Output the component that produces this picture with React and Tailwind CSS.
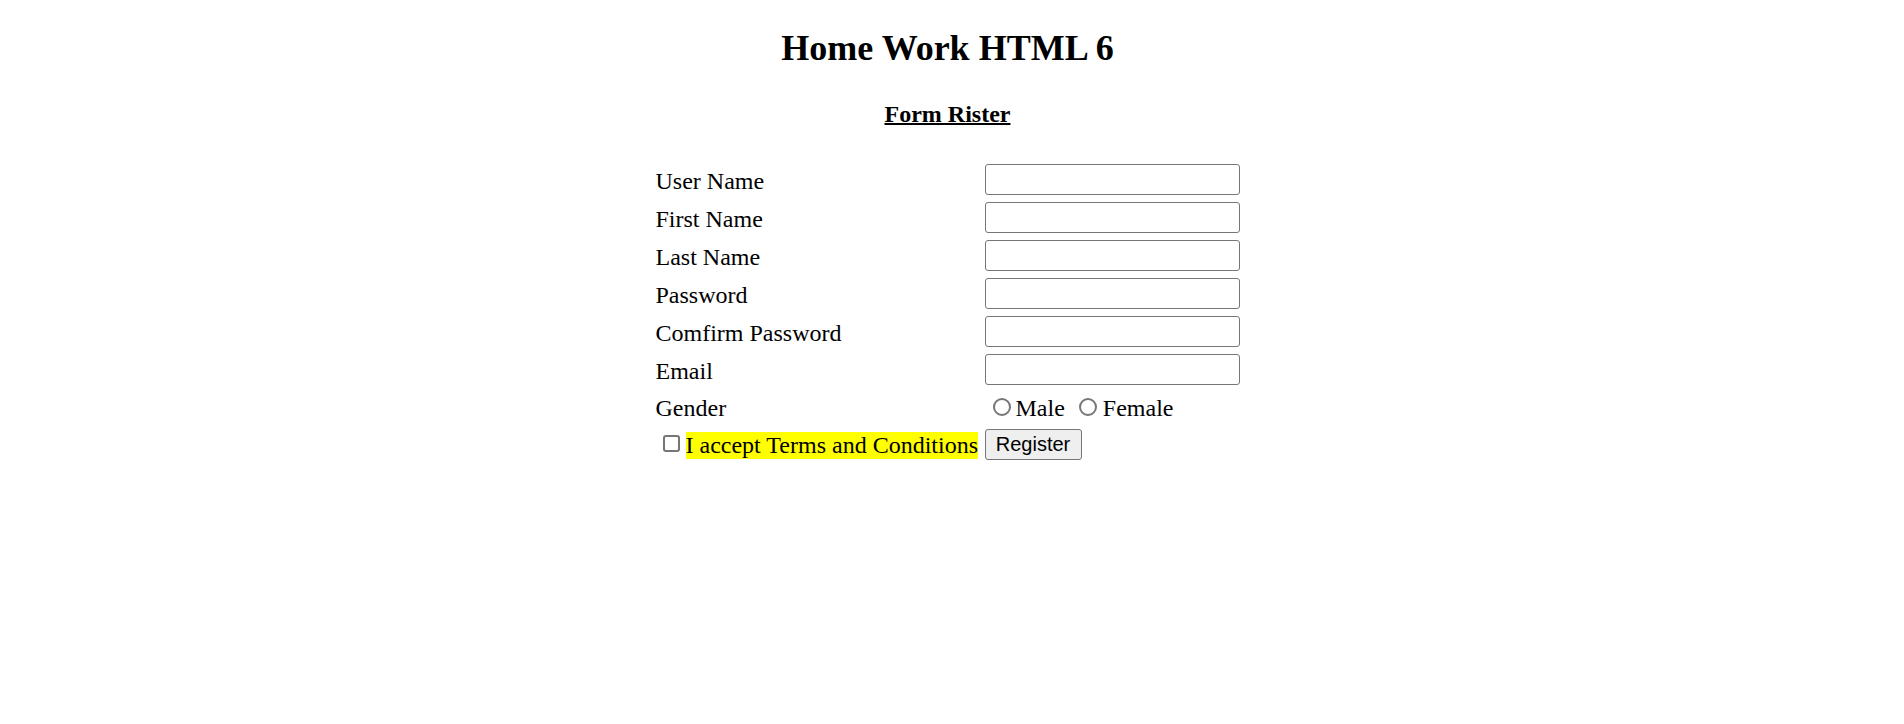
export default function App() {
  const fields = [
    "User Name",
    "First Name",
    "Last Name",
    "Password",
    "Comfirm Password",
    "Email",
  ];
  return (
    <div className="min-h-screen bg-white pr-[9px] font-['Liberation_Serif','Times_New_Roman',serif] text-black">
      <h1 className="pt-[28px] text-center text-[36px] font-bold leading-[40px]">
        Home Work HTML 6
      </h1>
      <h4 className="mt-[33px] text-center text-[24px] font-bold leading-[27px]">
        <span className="underline decoration-2">Form Rister</span>
      </h4>
      <form className="mx-auto mt-[36px] grid w-fit grid-cols-[323px_255px] gap-x-[6px] gap-y-[7px]">
        {fields.map((f) => (
          <div key={f} className="contents">
            <label className="flex h-[31px] items-center pt-[3px] text-[24px] leading-[27px]">
              {f}
            </label>
            <input
              type={f.includes("Password") ? "password" : f === "Email" ? "email" : "text"}
              className="h-[31px] w-[255px] rounded-[3px] border border-[#767676] bg-white px-[3px] font-['Liberation_Sans',Arial,sans-serif] text-[20px] outline-none"
            />
          </div>
        ))}
        <label className="flex h-[29px] items-start text-[24px] leading-[27px]">
          <span className="mt-[2.5px]">Gender</span>
        </label>
        <div className="flex h-[29px] items-start text-[24px] leading-[27px]">
          <input
            type="radio"
            name="gender"
            className="ml-[8px] mr-[5px] h-[18px] w-[18px] self-center appearance-none rounded-full border-2 border-[#767676] bg-white"
          />
          <span className="mt-[2.5px]">Male</span>
          <input
            type="radio"
            name="gender"
            className="ml-[14px] mr-[6px] h-[18px] w-[18px] self-center appearance-none rounded-full border-2 border-[#767676] bg-white"
          />
          <span className="mt-[2.5px]">Female</span>
        </div>
        <div className="flex h-[31px] items-start text-[24px] leading-[27px]">
          <input
            type="checkbox"
            className="ml-[7px] mt-[7px] h-[17px] w-[17px] appearance-none rounded-[3px] border-2 border-[#767676] bg-white"
          />
          <span className="ml-[6px] mt-[4px] whitespace-nowrap bg-[#ffff00]">
            I accept Terms and Conditions
          </span>
        </div>
        <div className="flex h-[31px] items-start">
          <button
            type="button"
            className="mt-[1px] h-[31px] w-[97px] rounded-[3px] border border-[#767676] bg-[#efefef] font-['Liberation_Sans',Arial,sans-serif] text-[20px] leading-[23px] text-black"
          >
            Register
          </button>
        </div>
      </form>
    </div>
  );
}
